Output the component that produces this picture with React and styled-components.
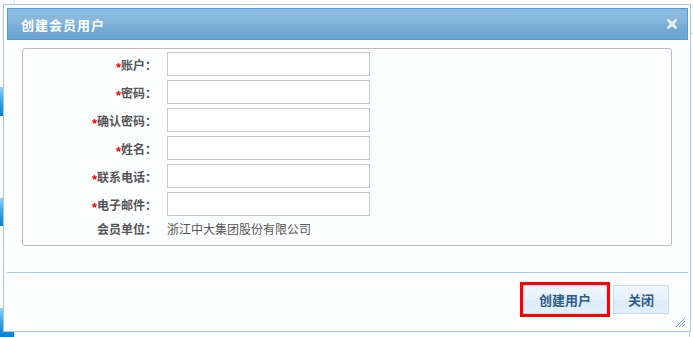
import styled, { createGlobalStyle } from "styled-components";

const GlobalStyle = createGlobalStyle`
  html, body {
    margin: 0;
    padding: 0;
    background: #fff;
  }
  body {
    font-family: "Liberation Sans", "Noto Sans CJK SC", sans-serif;
    font-size: 12px;
  }
`;

const Page = styled.div`
  position: relative;
  width: 693px;
  height: 337px;
  overflow: hidden;
  background: #fff;
`;

/* page content behind the dialog */
const Backdrop = styled.div`
  display: flex;
  height: 100%;
`;

const SideNav = styled.div`
  width: 14px;
  display: flex;
  flex-direction: column;
  border-right: 1px solid #d8dde3;
  padding-top: 87px;
  gap: 82px;
`;

const SideTab = styled.div`
  height: 30px;
  background: linear-gradient(#8fd0fb, #35a2e6 50%, #0a80cc);
`;

const Main = styled.div`
  flex: 1;
  display: flex;
  justify-content: flex-end;
  padding-top: 33px;
`;

const SideTable = styled.div`
  width: 3px;
  border-top: 1px solid #b9d4e9;
  border-left: 1px solid #b9d4e9;
`;

const Dialog = styled.div`
  position: absolute;
  left: 3px;
  top: 4px;
  width: 688px;
  height: 328px;
  box-sizing: border-box;
  border: 1px solid #a9c9e2;
  background: #fcfdfe;
  padding: 3px 2px 0 3px;
  display: flex;
  flex-direction: column;
`;

const TitleBar = styled.div`
  height: 32px;
  box-sizing: border-box;
  border: 1px solid #4f9cd9;
  background: linear-gradient(
    #8dbbe0 0%,
    #86b6dc 45%,
    #76acd5 58%,
    #6ba4d0 100%
  );
  display: flex;
  align-items: center;
  padding: 0 10px 0 13px;
  color: #fff;
`;

const Title = styled.span`
  font-family: "Noto Sans CJK SC", sans-serif;
  font-weight: bold;
  font-size: 13px;
  letter-spacing: 1px;
`;

const Spacer = styled.div`
  flex: 1;
`;

const CloseIcon = () => (
  <svg width="10" height="10" viewBox="0 0 10 10">
    <path
      d="M1.5 1.5 L8.5 8.5 M8.5 1.5 L1.5 8.5"
      stroke="#eef3f8"
      strokeWidth="2.6"
      strokeLinecap="square"
    />
  </svg>
);

const Body = styled.div`
  flex: 1;
  display: flex;
  flex-direction: column;
`;

const FieldBox = styled.div`
  margin: 8px 16px 0 15px;
  border: 1px solid #bfb8c0;
  border-radius: 3px;
  padding: 3px 0 7px 0;
  display: grid;
  grid-template-columns: 134px 203px;
  column-gap: 10px;
  row-gap: 4px;
  align-items: center;
`;

const Label = styled.div`
  font-family: "Noto Sans CJK SC", sans-serif;
  font-weight: bold;
  font-size: 12px;
  color: #555;
  text-align: right;
  white-space: nowrap;
`;

const Star = styled.span`
  display: inline-block;
  transform: translateY(2px);
  color: #ee0000;
  font-family: "Liberation Sans", sans-serif;
  font-size: 13px;
  font-weight: bold;
`;

const Input = styled.input`
  box-sizing: border-box;
  width: 203px;
  height: 24px;
  border: 1px solid #c9c9c9;
  background: #fff;
  margin: 0;
  padding: 0 4px;
  outline: none;
`;

const Value = styled.div`
  font-family: "Noto Sans CJK SC", sans-serif;
  font-size: 12px;
  color: #555;
  line-height: 18px;
`;

const StaticLabel = styled(Label)`
  line-height: 18px;
`;

const Divider = styled.div`
  margin-top: auto;
  border-top: 1px solid #a9cde8;
`;

const Footer = styled.div`
  height: 58px;
  display: flex;
  justify-content: flex-end;
  align-items: flex-start;
  padding: 12px 19px 0 0;
  box-sizing: border-box;
  position: relative;
`;

const Button = styled.button`
  height: 29px;
  padding: 0 ${(p) => p.$pad}px;
  box-sizing: border-box;
  border: 1px solid #c6ddf0;
  background: linear-gradient(#eef6fd, #e6f1fb 50%, #dcecf9 55%, #e3f0fb);
  color: #2e5d8c;
  font-family: "Noto Sans CJK SC", sans-serif;
  font-weight: bold;
  font-size: 13px;
  cursor: pointer;
  margin-left: ${(p) => p.$gap || 0}px;
  ${(p) =>
    p.$marked &&
    `
    outline: 3px solid #ff0000;
    outline-offset: 0px;
  `}
`;

const Grip = styled.svg`
  position: absolute;
  right: 2px;
  bottom: 3px;
`;

const fields = ["账户", "密码", "确认密码", "姓名", "联系电话", "电子邮件"];

export default function App() {
  return (
    <>
      <GlobalStyle />
      <Page>
        <Backdrop>
          <SideNav>
            <SideTab />
            <SideTab />
            <SideTab />
          </SideNav>
          <Main>
            <SideTable />
          </Main>
        </Backdrop>
        <Dialog>
          <TitleBar>
            <Title>创建会员用户</Title>
            <Spacer />
            <CloseIcon />
          </TitleBar>
          <Body>
            <FieldBox>
              {fields.map((name) => [
                <Label key={name + "l"}>
                  <Star>*</Star>
                  {name}：
                </Label>,
                <Input key={name + "i"} />,
              ])}
              <StaticLabel>会员单位：</StaticLabel>
              <Value>浙江中大集团股份有限公司</Value>
            </FieldBox>
            <Divider />
            <Footer>
              <Button $pad={15} $marked>
                创建用户
              </Button>
              <Button $pad={14} $gap={6}>
                关闭
              </Button>
              <Grip width="11" height="11" viewBox="0 0 11 11">
                <path
                  d="M10 1 L1 10 M10 4 L4 10 M10 7 L7 10"
                  stroke="#5b9fd6"
                  strokeWidth="1"
                />
              </Grip>
            </Footer>
          </Body>
        </Dialog>
      </Page>
    </>
  );
}
